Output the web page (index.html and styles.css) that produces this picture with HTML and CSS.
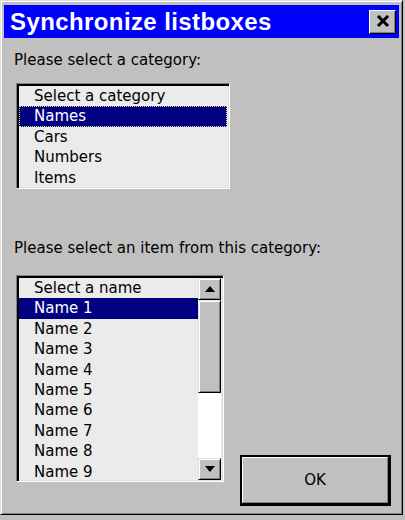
FILE: index.html
```html
<!DOCTYPE html>
<html>
<head>
<meta charset="utf-8">
<link rel="stylesheet" href="styles.css">
</head>
<body>
<div class="window">
  <div class="titlebar">
    <span class="title">Synchronize listboxes</span>
    <span class="close"><svg width="14" height="13" viewBox="0 0 14 13"><path d="M2 1 L12 11 M12 1 L2 11" stroke="#000" stroke-width="3"/></svg></span>
  </div>
  <div class="content">
    <div class="label">Please select a category:</div>
    <div class="listbox lb1">
      <div class="item">Select a category</div>
      <div class="item sel focus">Names</div>
      <div class="item">Cars</div>
      <div class="item">Numbers</div>
      <div class="item">Items</div>
    </div>
    <div class="label label2">Please select an item from this category:</div>
    <div class="bottom">
      <div class="listbox lb2">
        <div class="items">
          <div class="item">Select a name</div>
          <div class="item sel">Name 1</div>
          <div class="item">Name 2</div>
          <div class="item">Name 3</div>
          <div class="item">Name 4</div>
          <div class="item">Name 5</div>
          <div class="item">Name 6</div>
          <div class="item">Name 7</div>
          <div class="item">Name 8</div>
          <div class="item">Name 9</div>
        </div>
        <div class="scrollbar">
          <div class="sbtn"><svg width="10" height="6" viewBox="0 0 10 6"><path d="M5 0 L10 6 L0 6 Z" fill="#000"/></svg></div>
          <div class="thumb"></div>
          <div class="track"></div>
          <div class="sbtn"><svg width="10" height="6" viewBox="0 0 10 6"><path d="M0 0 L10 0 L5 6 Z" fill="#000"/></svg></div>
        </div>
      </div>
      <div class="okbtn"><div class="okinner">OK</div></div>
    </div>
  </div>
</div>
</body>
</html>
```
FILE: styles.css
```css
html, body {
  margin: 0;
  padding: 0;
  background: #c0c0c0;
}
body {
  width: 405px;
  height: 520px;
  overflow: hidden;
  font-family: "DejaVu Sans", Verdana, sans-serif;
}
.window {
  box-sizing: border-box;
  width: 403px;
  height: 515px;
  border-top: 1px solid #dfdfdf;
  border-left: 1px solid #dfdfdf;
  border-right: 1px solid #000;
  border-bottom: 1px solid #000;
  box-shadow: inset 1px 1px 0 #fff, inset -1px -1px 0 #808080;
  padding: 4px 3px 3px 3px;
  background: #c0c0c0;
}
.titlebar {
  height: 33px;
  background: #0000ff;
  display: flex;
  align-items: center;
  justify-content: space-between;
  padding: 0 3px 0 6px;
}
.title {
  color: #fff;
  font-family: "Liberation Sans", Arial, sans-serif;
  font-weight: bold;
  font-size: 24px;
  letter-spacing: 0.4px;
}
.close {
  box-sizing: border-box;
  width: 27px;
  height: 24px;
  background: #c0c0c0;
  border-top: 1px solid #fff;
  border-left: 1px solid #fff;
  border-right: 1px solid #000;
  border-bottom: 1px solid #000;
  box-shadow: inset -1px -1px 0 #808080;
  display: flex;
  align-items: center;
  justify-content: center;
}
.content {
  padding: 13px 0 0 10px;
}
.label {
  font-size: 15px;
  color: #000;
  line-height: 18px;
}
.label2 {
  margin-top: 50px;
}
.listbox {
  box-sizing: border-box;
  background: #ebebeb;
  border-top: 1px solid #808080;
  border-left: 1px solid #808080;
  border-right: 1px solid #fff;
  border-bottom: 1px solid #fff;
  box-shadow: inset 2px 2px 0 #000, inset -1px -1px 0 #dfdfdf;
  padding: 2px 2px 1px 2px;
}
.lb1 {
  width: 214px;
  height: 106px;
  margin: 14px 0 0 2px;
}
.item {
  font-size: 15px;
  height: 20.4px;
  line-height: 20.4px;
  padding-left: 15px;
  color: #000;
  white-space: nowrap;
  box-sizing: border-box;
}
.sel {
  background: #000080;
  color: #fff;
}
.focus {
  outline: 1px dotted #d8d890;
  outline-offset: -1px;
}
.bottom {
  display: flex;
  align-items: flex-end;
  margin-top: 18px;
}
.lb2 {
  width: 208px;
  height: 207px;
  margin-left: 2px;
  display: flex;
}
.items {
  flex: 1;
}
.scrollbar {
  width: 23px;
  display: flex;
  flex-direction: column;
  background: #fff;
}
.sbtn {
  box-sizing: border-box;
  height: 22px;
  background: #c0c0c0;
  border-top: 1px solid #dfdfdf;
  border-left: 1px solid #dfdfdf;
  border-right: 1px solid #000;
  border-bottom: 1px solid #000;
  box-shadow: inset 1px 1px 0 #fff, inset -1px -1px 0 #808080;
  display: flex;
  align-items: center;
  justify-content: center;
}
.thumb {
  box-sizing: border-box;
  height: 93px;
  background: #c0c0c0;
  border-top: 1px solid #dfdfdf;
  border-left: 1px solid #dfdfdf;
  border-right: 1px solid #000;
  border-bottom: 1px solid #000;
  box-shadow: inset 1px 1px 0 #fff, inset -1px -1px 0 #808080;
}
.track {
  flex: 1;
  background: #fff;
}
.okbtn {
  box-sizing: border-box;
  width: 151px;
  height: 51px;
  margin-left: 16px;
  margin-bottom: -24px;
  border: 2px solid #000;
  border-right-width: 3px;
  border-bottom-width: 3px;
  background: #c0c0c0;
}
.okinner {
  box-sizing: border-box;
  height: 100%;
  border-top: 1px solid #fff;
  border-left: 1px solid #fff;
  border-right: 1px solid #808080;
  border-bottom: 1px solid #808080;
  display: flex;
  align-items: center;
  justify-content: center;
  font-size: 15px;
  color: #000;
}
```
